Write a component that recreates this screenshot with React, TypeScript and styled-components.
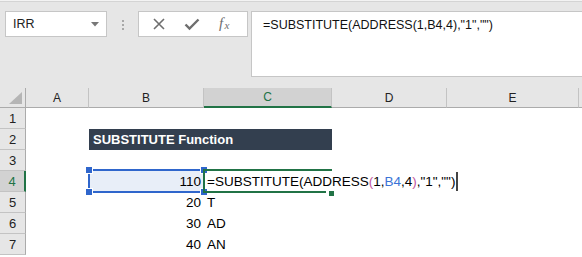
import React from 'react';
import styled, { createGlobalStyle } from 'styled-components';

const GlobalStyle = createGlobalStyle`
  body {
    margin: 0;
    background: #ffffff;
    font-family: 'Liberation Sans', Arial, sans-serif;
    overflow: hidden;
  }
`;

const Page = styled.div`
  width: 582px;
  height: 257px;
  overflow: hidden;
  background: #ffffff;
`;

const Toolbar = styled.div`
  display: flex;
  align-items: flex-start;
  height: 87px;
  box-sizing: border-box;
  padding-top: 10px;
  background: #e6e6e6;
  border-top: 1px solid #f3f3f3;
  box-shadow: inset 0 1px 0 #d4d4d4;
`;

const NameBox = styled.div`
  display: flex;
  align-items: center;
  justify-content: space-between;
  box-sizing: border-box;
  width: 102px;
  height: 26px;
  margin-left: 5px;
  padding: 0 7px 0 7px;
  background: #ffffff;
  border: 1px solid #c6c6c6;
  font-size: 12.5px;
  color: #222;
`;

const Grip = styled.div`
  display: flex;
  flex-direction: column;
  gap: 2px;
  width: 2px;
  margin: 9px 14px 0 15px;
  span {
    width: 2px;
    height: 2px;
    background: #a8a8a8;
  }
`;

const ButtonBox = styled.div`
  display: flex;
  align-items: center;
  justify-content: space-around;
  box-sizing: border-box;
  width: 110px;
  height: 26px;
  padding: 0 4px;
  background: #ffffff;
  border: 1px solid #c6c6c6;
`;

const FormulaBox = styled.div`
  flex: 1;
  box-sizing: border-box;
  height: 66px;
  margin-left: 3px;
  padding: 6px 0 0 11px;
  background: #ffffff;
  border: 1px solid #c6c6c6;
  border-right: none;
  font-size: 12.5px;
  color: #111;
  white-space: nowrap;
`;

const Sheet = styled.div`
  display: grid;
  grid-template-columns: 26px 63px 115px 128px 115px 132px 1fr;
  grid-template-rows: 20px repeat(7, 21px);
  border-top: 1px solid #e6e6e6;
`;

const ColHead = styled.div<{ $active?: boolean }>`
  display: flex;
  align-items: center;
  justify-content: center;
  box-sizing: border-box;
  background: ${p => (p.$active ? '#d2d2d2' : '#e6e6e6')};
  border-right: 1px solid #c3c3c3;
  border-bottom: ${p => (p.$active ? '2px solid #217346' : '1px solid #ababab')};
  font-size: 12px;
  color: ${p => (p.$active ? '#217346' : '#222')};
`;

const Corner = styled(ColHead)`
  align-items: flex-end;
  justify-content: flex-end;
  padding: 0 3px 3px 0;
  border-right: 1px solid #ababab;
`;

const RowHead = styled.div<{ $active?: boolean }>`
  display: flex;
  align-items: center;
  justify-content: center;
  box-sizing: border-box;
  background: ${p => (p.$active ? '#d2d2d2' : '#e6e6e6')};
  border-bottom: 1px solid #c3c3c3;
  border-right: ${p => (p.$active ? '2px solid #217346' : '1px solid #ababab')};
  font-size: 13px;
  color: ${p => (p.$active ? '#217346' : '#222')};
`;

const Cell = styled.div<{ $align?: 'left' | 'right' }>`
  position: relative;
  display: flex;
  align-items: center;
  justify-content: ${p => (p.$align === 'right' ? 'flex-end' : 'flex-start')};
  padding: 0 3px;
  font-size: 13.5px;
  color: #000;
  white-space: nowrap;
`;

const TitleCell = styled.div`
  grid-column: span 2;
  display: flex;
  align-items: center;
  padding: 0 4px;
  background: #333f4f;
  color: #ffffff;
  font-size: 13px;
  font-weight: bold;
`;

const Selection = styled.div`
  position: absolute;
  inset: -2px -1px -1px -1px;
  background: #e8eef8;
  border: 2px solid #2f66cc;
  z-index: 0;
`;

const Handle = styled.div<{ $x: 'left' | 'right'; $y: 'top' | 'bottom' }>`
  position: absolute;
  ${p => p.$x}: -4px;
  ${p => p.$y}: -4px;
  width: 6px;
  height: 6px;
  background: #2f66cc;
  border: 1px solid #ffffff;
  box-sizing: content-box;
  margin: -1px;
`;

const CellText = styled.span`
  position: relative;
  z-index: 1;
`;

const EditFrame = styled.div`
  position: absolute;
  inset: -2px 0 -1px -1px;
  border-top: 2px solid #217346;
  border-left: 2px solid #217346;
  pointer-events: none;
  &::after {
    content: '';
    position: absolute;
    left: -2px;
    right: 6px;
    bottom: 0;
    height: 2px;
    background: #217346;
  }
`;

const FillHandle = styled.div`
  position: absolute;
  right: -2px;
  bottom: -3px;
  width: 5px;
  height: 5px;
  background: #217346;
  border-left: 1px solid #fff;
`;

const Overflow = styled.span`
  position: relative;
  z-index: 2;
  display: flex;
  align-items: center;
`;

const Paren = styled.span`
  color: #c2569e;
`;

const Ref = styled.span`
  color: #3b73d6;
`;

const Caret = styled.span`
  display: inline-block;
  width: 2px;
  height: 19px;
  margin-left: 1px;
  background: #444;
`;

const Icon = styled.svg`
  display: block;
`;

const rows: { n: number; b?: string; c?: string }[] = [
  { n: 5, b: '20', c: 'T' },
  { n: 6, b: '30', c: 'AD' },
  { n: 7, b: '40', c: 'AN' },
];

const Empty = () => (
  <>
    <Cell />
    <Cell />
    <Cell />
  </>
);

export default function App() {
  return (
    <Page>
      <GlobalStyle />
      <Toolbar>
        <NameBox>
          <span>IRR</span>
          <Icon width="8" height="5" viewBox="0 0 8 5">
            <path d="M0 0h8L4 4.5z" fill="#777" />
          </Icon>
        </NameBox>
        <Grip>
          <span />
          <span />
          <span />
        </Grip>
        <ButtonBox>
          <Icon width="14" height="14" viewBox="0 0 14 14">
            <path d="M2 2l10 10M12 2L2 12" stroke="#6e6e6e" strokeWidth="1.6" />
          </Icon>
          <Icon width="16" height="14" viewBox="0 0 16 14">
            <path d="M1.5 7.5l4 4 9-9" stroke="#6e6e6e" strokeWidth="2.4" fill="none" />
          </Icon>
          <Icon width="16" height="16" viewBox="0 0 16 16">
            <text
              x="1"
              y="12"
              fontFamily="'Liberation Serif', serif"
              fontStyle="italic"
              fontSize="15"
              fill="#6e6e6e"
            >
              f
            </text>
            <text
              x="6.5"
              y="13"
              fontFamily="'Liberation Serif', serif"
              fontStyle="italic"
              fontSize="11"
              fill="#6e6e6e"
            >
              x
            </text>
          </Icon>
        </ButtonBox>
        <FormulaBox>=SUBSTITUTE(ADDRESS(1,B4,4),"1","")</FormulaBox>
      </Toolbar>
      <Sheet>
        <Corner>
          <Icon width="13" height="12" viewBox="0 0 13 12">
            <path d="M13 0V12H0z" fill="#b5b5b5" />
          </Icon>
        </Corner>
        <ColHead>A</ColHead>
        <ColHead>B</ColHead>
        <ColHead $active>C</ColHead>
        <ColHead>D</ColHead>
        <ColHead>E</ColHead>
        <ColHead />

        <RowHead>1</RowHead>
        <Cell />
        <Empty />
        <Cell />
        <Cell />

        <RowHead>2</RowHead>
        <Cell />
        <TitleCell>SUBSTITUTE Function</TitleCell>
        <Cell />
        <Cell />
        <Cell />

        <RowHead>3</RowHead>
        <Cell />
        <Empty />
        <Cell />
        <Cell />

        <RowHead $active>4</RowHead>
        <Cell />
        <Cell $align="right">
          <Selection>
            <Handle $x="left" $y="top" />
            <Handle $x="right" $y="top" />
            <Handle $x="left" $y="bottom" />
            <Handle $x="right" $y="bottom" />
          </Selection>
          <CellText>110</CellText>
        </Cell>
        <Cell>
          <EditFrame>
            <FillHandle />
          </EditFrame>
          <Overflow>
            =SUBSTITUTE(ADDRESS<Paren>(</Paren>1,<Ref>B4</Ref>,4<Paren>)</Paren>,"1","")
            <Caret />
          </Overflow>
        </Cell>
        <Cell />
        <Cell />
        <Cell />

        {rows.map(r => (
          <React.Fragment key={r.n}>
            <RowHead>{r.n}</RowHead>
            <Cell />
            <Cell $align="right">{r.b}</Cell>
            <Cell>{r.c}</Cell>
            <Cell />
            <Cell />
            <Cell />
          </React.Fragment>
        ))}
      </Sheet>
    </Page>
  );
}
